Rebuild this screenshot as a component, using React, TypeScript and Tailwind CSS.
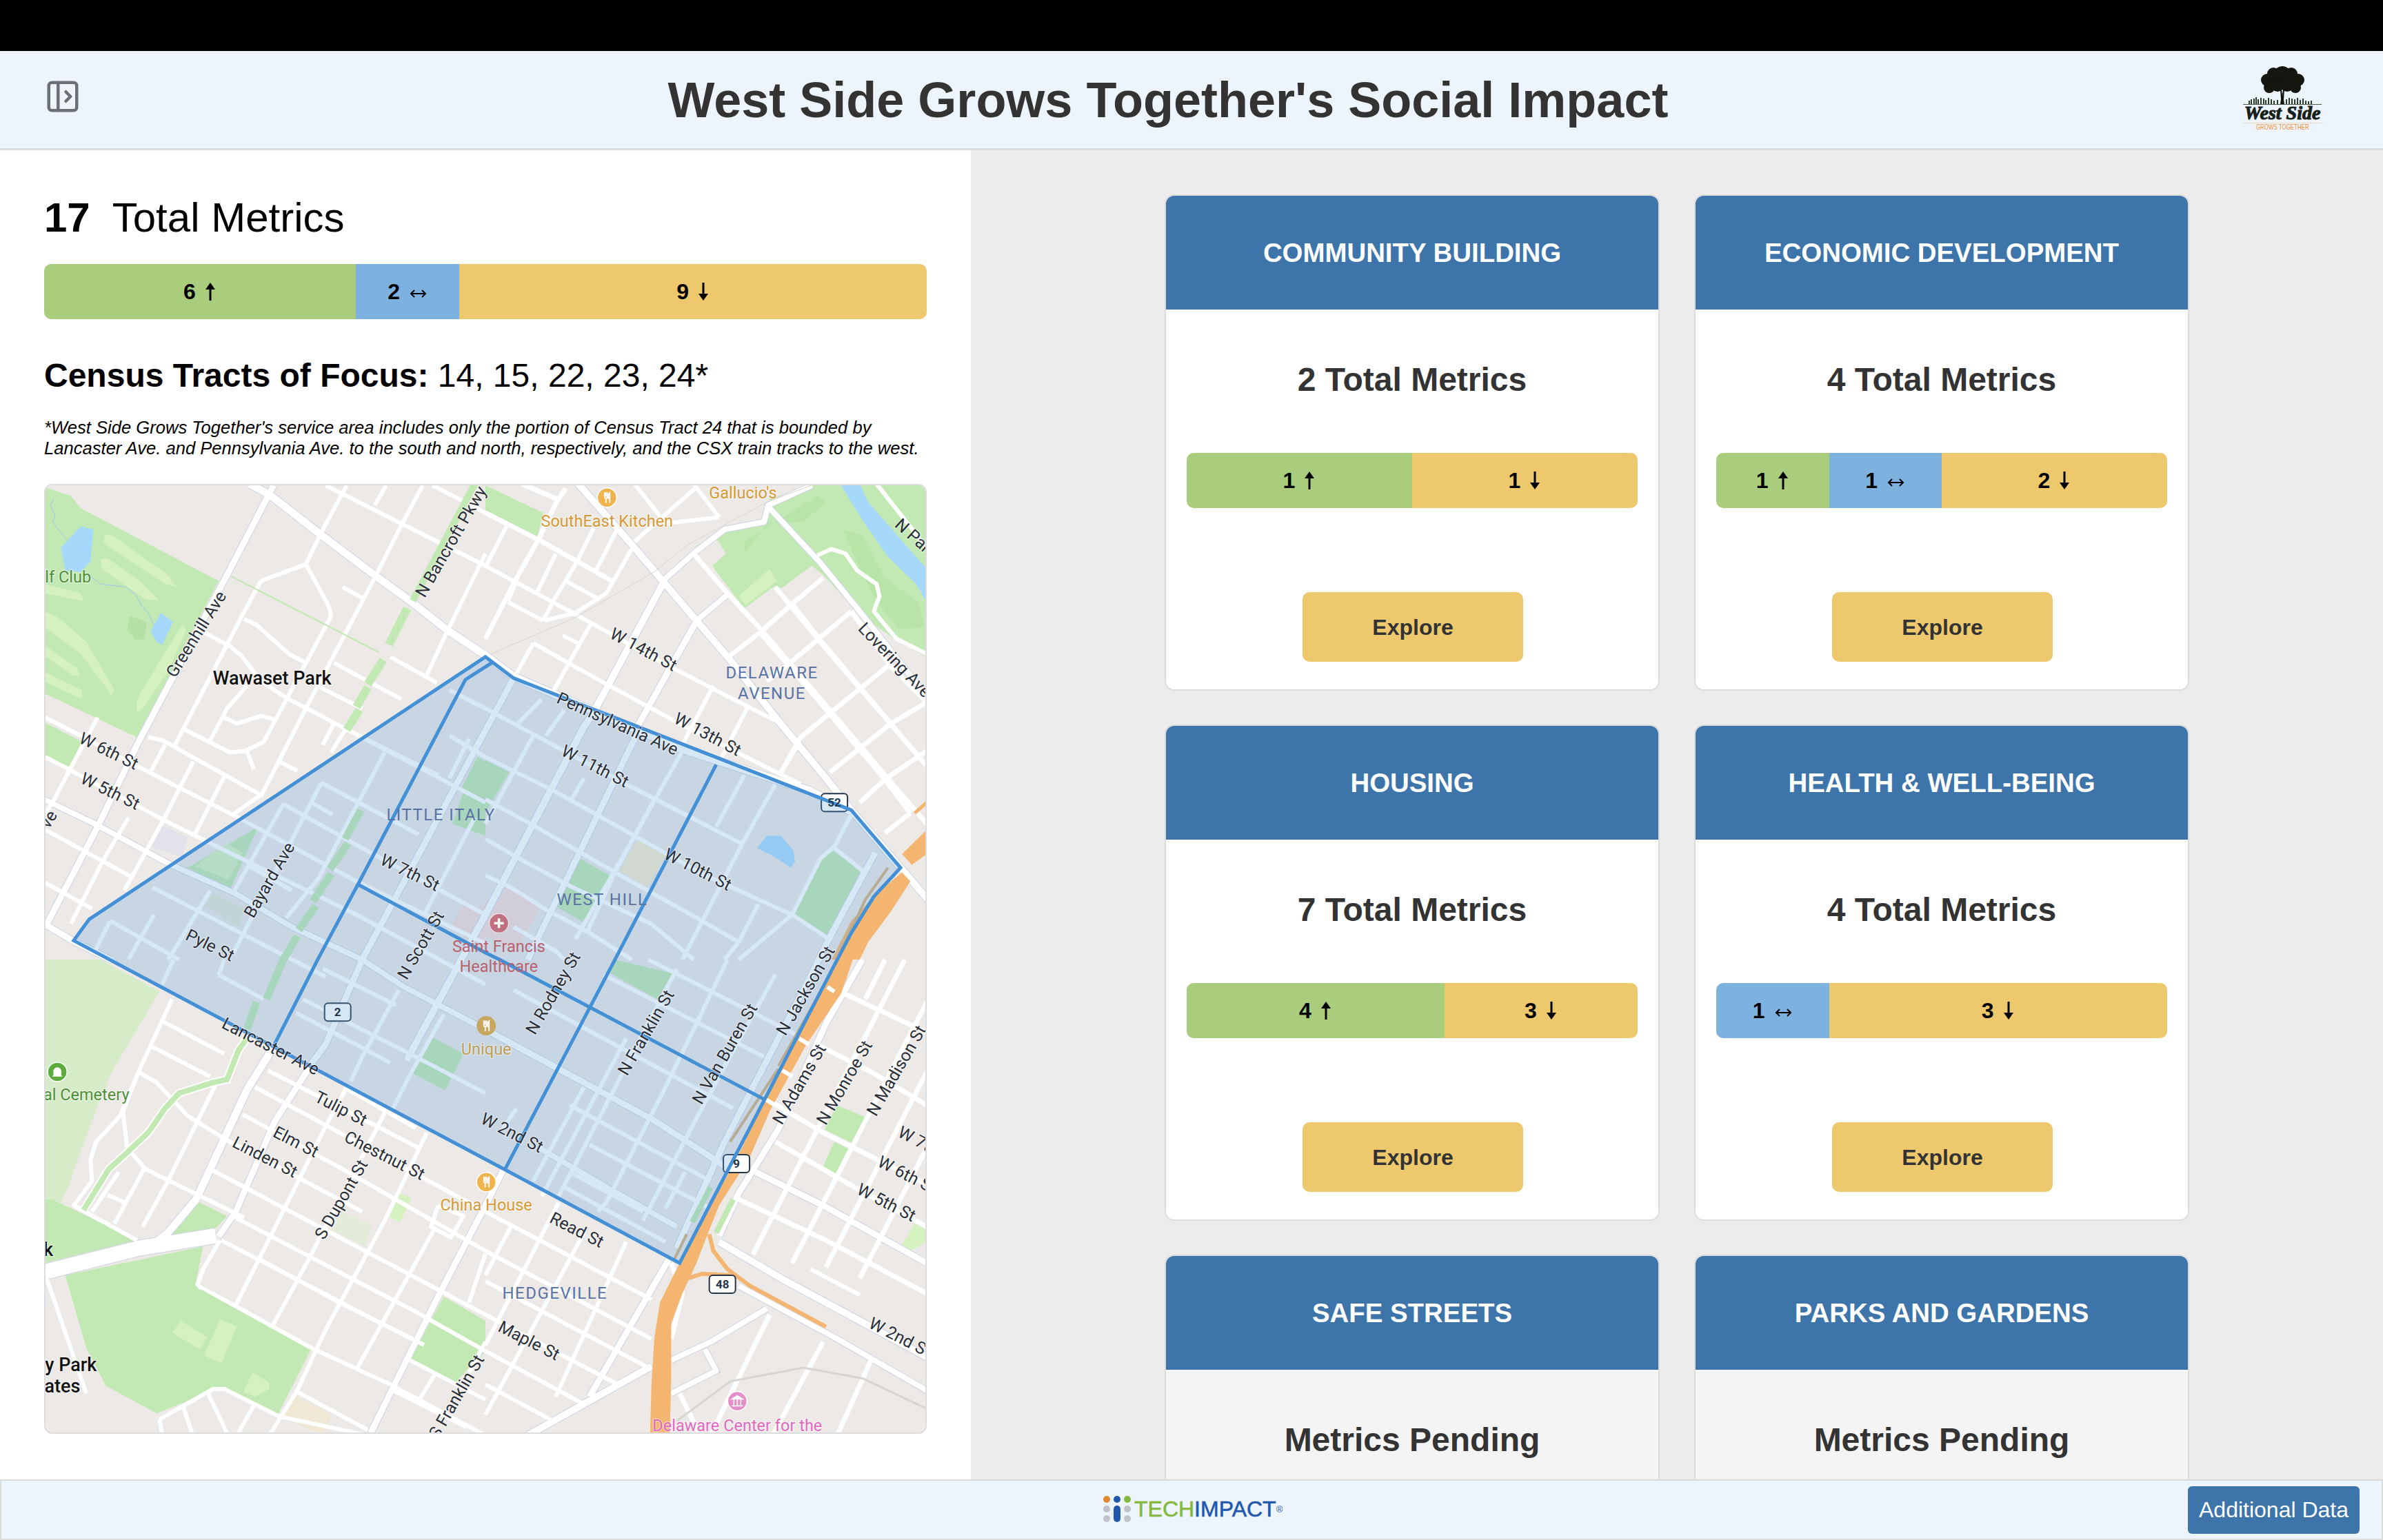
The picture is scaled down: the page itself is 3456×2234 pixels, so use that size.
import { PanelLeftOpen } from "lucide-react";

// map data is noted per quadrant of the 1280x1378 map, zoom coordinates 0-1568 on each side
type Road = [number, number, string];
type Label = [number, number, number, number, string, string?, number?];

const mx = (q: number, x: number) => ((q === 2 || q === 4 ? 1568 : 0) + x) / 2.45;
const my = (q: number, y: number) => ((q >= 3 ? 1568 : 0) + y) / 2.272;
const pts = (q: number, s: string) =>
  s
    .split(" ")
    .map((p) => {
      const [x, y] = p.split(",").map(Number);
      return `${mx(q, x).toFixed(1)},${my(q, y).toFixed(1)}`;
    })
    .join(" ");

const PARK = "#c2e9b3";
const LIGHT = "#d6f1c0";

const fills: [number, string, string][] = [
  // golf club and other parks
  [1, PARK, "0,10 95,40 130,80 620,320 330,835 0,690"],
  [1, PARK, "0,785 135,850 95,935 0,895"],
  [1, LIGHT, "215,170 235,165 440,300 470,340 430,330 210,195"],
  [1, LIGHT, "200,250 225,245 340,320 410,385 360,380 205,280"],
  [1, LIGHT, "0,330 130,360 140,385 0,360"],
  [1, LIGHT, "0,420 50,440 150,520 250,680 240,695 130,560 0,470"],
  [1, LIGHT, "0,530 120,610 125,635 100,630 0,565"],
  [1, LIGHT, "0,620 135,680 135,710 0,650"],
  [1, LIGHT, "490,465 505,480 440,620 350,740 330,755 330,710 420,570"],
  [1, "#b3e0a5", "305,435 365,455 355,510 325,515 295,480"],
  [1, "#a6d8fc", "60,210 130,140 175,150 165,255 130,290 75,285"],
  [1, "#a6d8fc", "415,425 458,455 420,530 400,520 378,487"],
  [1, PARK, "510,1265 760,1130 660,1340"],
  [1, LIGHT, "535,1260 650,1185 705,1215 655,1305"],
  [1, "#e6e6d6", "570,1390 600,1350 715,1400 690,1460"],
  [1, "#e2e2ea", "380,1195 420,1125 510,1165 490,1230"],
  [1, "#f8dcd8", "1450,1450 1490,1385 1568,1420 1568,1530 1500,1500"],
  [2, "#f8dcd8", "-20,1400 60,1325 200,1385 110,1540 -20,1480"],
  [1, PARK, "1485,1000 1540,900 1568,915 1568,1105"],
  [1, PARK, "1450,1120 1490,1015 1568,1055 1568,1160"],
  [2, PARK, "0,910 85,950 0,1085"],
  [2, PARK, "320,1225 450,1295 350,1445 235,1385"],
  [2, PARK, "1235,1210 1335,1275 1215,1490 1095,1425 1185,1235"],
  [2, "#f7ebcc", "540,1175 640,1225 575,1330 475,1275"],
  [2, "#a6d8fc", "965,1200 1000,1160 1050,1160 1095,1210 1100,1245 1085,1265 1030,1230"],
  [2, PARK, "0,5 205,95 185,175 0,90"],
  [2, PARK, "735,210 850,160 990,120 1010,50 1170,0 1568,0 1568,570 1450,510 1320,420 1200,300 1160,270 1050,345 1030,335 920,410 805,270 855,230 825,185"],
  [2, "#b8e4a8", "920,190 1180,40 1210,60 1130,125 1000,130 920,230"],
  [2, "#b8e4a8", "1270,150 1340,170 1420,310 1540,390 1560,470 1470,480 1400,400 1330,280"],
  [2, LIGHT, "900,370 1010,280 1035,320 925,400"],
  [2, "#a6d8fc", "1260,0 1330,0 1360,60 1568,280 1568,390 1530,330 1430,240 1340,120"],
  // cemetery and south park
  [3, "#d6ebc8", "0,0 200,0 410,105 240,370 170,530 85,750 60,800 30,790 0,820"],
  [3, PARK, "0,790 30,790 330,925 0,1000"],
  [3, PARK, "75,1040 565,945 540,1060 950,1280 830,1500 630,1410 400,1495 220,1405 150,1280"],
  [3, PARK, "540,795 650,845 610,885 430,925"],
  [3, PARK, "1420,1110 1568,1190 1568,1290 1460,1395 1300,1320"],
  [3, PARK, "1370,250 1490,310 1425,430 1300,370"],
  [3, LIGHT, "455,1230 485,1190 580,1245 555,1285"],
  [3, LIGHT, "625,1185 685,1210 630,1330 568,1305"],
  [3, LIGHT, "740,1360 800,1395 800,1415 750,1440 708,1425"],
  [3, LIGHT, "1250,765 1305,785 1265,865 1225,845"],
  [3, "#e2ecd8", "1060,830 1165,875 1140,945 1025,890"],
  [3, "#f0e8d4", "890,1435 1020,1500 990,1568 850,1505"],
  [4, PARK, "460,0 665,45 610,130 445,45"],
  [4, PARK, "1250,480 1365,525 1315,610 1205,560"],
  [4, PARK, "1240,600 1305,630 1255,710 1200,680"],
  [4, LIGHT, "1525,870 1568,890 1568,930 1510,960 1480,940"],
];

const roads: Road[] = [
  // north west quadrant
  [1, 11, "730,0 800,35 980,165 1180,305 1300,385 1430,480 1568,565 1668,635"],
  [1, 9, "815,5 650,300 330,860 190,1130 10,1450"],
  [1, 9, "0,1450 100,1505 240,1570"],
  [1, 8, "0,1040 190,1125 450,1255 680,1350 880,1460 1130,1568 1280,1658 1568,1798"],
  [1, 5, "5,770 140,835 330,930 690,1100 1110,1310 1568,1515"],
  [1, 5, "5,900 420,1105 570,1175 1110,1420 1568,1650"],
  [1, 5, "5,1140 310,1295"],
  [1, 5, "5,1315 170,1400"],
  [1, 5, "1075,5 985,160 930,265"],
  [1, 5, "1215,5 1175,70"],
  [1, 5, "1345,5 1270,135 1180,300 930,740 770,1030"],
  [1, 5, "1568,230 1430,490 1360,630"],
  [1, 5, "1000,5 1568,270"],
  [1, 5, "1380,5 1568,95"],
  [1, 5, "1030,790 990,860"],
  [1, 5, "1070,810 1020,885"],
  [1, 5, "770,320 700,440 465,860"],
  [1, 5, "770,320 930,265 1010,400 1020,435 780,850 715,880 660,885 500,810"],
  [1, 5, "1060,340 1130,375"],
  [1, 5, "710,445 755,465 870,560 930,590"],
  [1, 5, "570,490 660,535 700,565 770,650 860,705 1130,835 1400,960"],
  [1, 5, "720,665 650,740 590,845"],
  [1, 5, "640,770 685,790 770,765 815,775"],
  [1, 5, "720,880 745,940"],
  [1, 5, "835,915 900,945"],
  [1, 5, "1030,590 1270,710"],
  [1, 5, "980,670 1130,740"],
  [1, 5, "1230,570 1395,655"],
  [1, 5, "370,835 420,845 770,1025"],
  [1, 5, "430,860 380,945"],
  [1, 5, "530,915 425,1105 285,1340"],
  [1, 5, "640,965 535,1155"],
  [1, 5, "190,770 95,935 30,1050 0,1090"],
  [1, 5, "770,1025 670,1090"],
  [1, 5, "300,1100 210,1240 95,1450"],
  // inside the area, north west
  [1, 5, "985,985 790,1335 670,1550"],
  [1, 5, "850,1055 670,1350"],
  [1, 5, "985,985 1330,1155"],
  [1, 5, "850,1055 1110,1190 1568,1420"],
  [1, 5, "950,1050 1025,1090"],
  [1, 5, "730,1260 880,1340"],
  [1, 5, "1210,885 975,1300 860,1430"],
  [1, 5, "385,1330 1000,1625"],
  [1, 5, "235,1440 480,1568"],
  [1, 5, "235,1440 180,1540"],
  [1, 5, "590,1340 480,1510 440,1568"],
  [1, 5, "390,1420 300,1568"],
  [1, 5, "1440,680 1568,740"],
  [1, 5, "1440,830 1568,900"],
  [1, 5, "1130,835 1568,1050"],
  [1, 5, "1530,1100 1350,1420"],
  [1, 5, "1510,840 1440,970"],
  // wide avenues crossing the area
  [2, 10, "630,330 380,760 350,800 0,1420 -280,1900"],
  [2, 9, "745,460 540,800 530,840 150,1568"],
  [1, 9, "1668,640 1130,1568 1000,1848 960,1898 820,2100 680,2400 620,2480"],
  // north east quadrant
  [2, 10, "330,0 520,200 630,320 745,445 870,580 1040,780 1210,970 1300,1075 1480,1270 1600,1400"],
  [2, 11, "100,635 700,875 1150,1010 1300,1080"],
  [2, 8, "1000,70 1190,260 1330,420 1568,700"],
  [2, 5, "1180,235 1230,215 1280,230 1320,285 1390,330 1400,370 1380,420 1460,510 1568,560"],
  [2, 5, "1390,0 1568,210"],
  [2, 6, "0,95 190,185 450,320"],
  [2, 6, "130,0 255,50"],
  [2, 6, "285,15 250,65 190,180 105,320 0,510"],
  [2, 5, "465,155 390,290"],
  [2, 5, "520,215 430,360 320,425 210,450"],
  [2, 5, "385,145 320,265 245,380 205,450"],
  [2, 5, "250,230 185,355"],
  [2, 5, "75,140 5,265"],
  [2, 5, "0,270 370,455 640,595 1030,780"],
  [2, 5, "80,390 205,450"],
  [2, 5, "110,320 80,385"],
  [2, 5, "285,320 395,375"],
  [2, 5, "275,500 330,525"],
  [2, 5, "170,525 110,625"],
  [2, 5, "170,525 430,660 690,790 1120,990"],
  [2, 5, "375,460 240,685"],
  [2, 5, "530,0 640,130 830,110"],
  [2, 5, "740,0 830,110"],
  [2, 5, "530,190 750,10"],
  [2, 8, "630,320 745,225 850,150 990,125 1005,70 1160,5"],
  [2, 8, "750,450 860,365"],
  [2, 6, "740,230 860,360 980,480 1200,720 1420,960 1568,1120"],
  [2, 6, "1030,340 1225,560 1420,770 1568,930"],
  [2, 6, "1200,310 1090,395 975,490 870,565"],
  [2, 6, "1300,420 1185,510 1075,595 1000,650"],
  [2, 6, "1430,600 1225,755 1120,835 1045,960"],
  [2, 6, "1568,720 1440,790 1225,950"],
  [2, 6, "1568,880 1425,970 1330,1050"],
  [2, 6, "1510,1085 1420,1150"],
  [2, 6, "975,490 1075,595 1225,760 1325,870 1420,975 1510,1085"],
  [2, 6, "1090,395 1185,510 1340,680 1440,790 1568,930"],
  [2, 6, "1300,420 1440,600 1568,720"],
  [2, 5, "810,665 700,860"],
  [2, 5, "935,730 840,900"],
  [2, 5, "1110,860 1045,960"],
  // inside the area, north east
  [2, 5, "0,740 490,985 910,1185"],
  [2, 5, "0,900 240,1010 530,1160 780,1290 1090,1420 1230,1505"],
  [2, 5, "0,1040 160,1120 460,1280 770,1440 900,1510"],
  [2, 5, "0,1170 130,1240 300,1325 590,1450 740,1568"],
  [2, 5, "0,1290 90,1330 210,1400 370,1480 520,1568"],
  [2, 5, "100,1460 250,1540 280,1568"],
  [2, 5, "200,710 115,790"],
  [2, 5, "280,745 215,830"],
  [2, 5, "170,830 0,1120"],
  [2, 5, "350,970 300,1050"],
  [2, 5, "700,880 530,1160 320,1500"],
  [2, 5, "920,960 820,1130"],
  [2, 5, "1030,990 910,1190 700,1568"],
  [2, 5, "1300,1090 1240,1195 1190,1235 1090,1420 900,1568"],
  [2, 5, "600,1040 460,1280 360,1480"],
  [2, 5, "970,1385 900,1510 850,1568"],
  [2, 9, "1385,1215 1220,1500 1130,1668 850,2168 680,2518"],
  [2, 5, "1240,1200 1340,1275"],
  // south west quadrant
  [3, 22, "-10,1032 340,950 610,910"],
  [3, 11, "820,280 720,430 540,790 440,900 400,930"],
  [3, 9, "1633,690 1568,810 1400,1110 1160,1560"],
  [3, 5, "455,130 340,360 280,500 295,620 360,690 710,850"],
  [3, 5, "425,205 640,310"],
  [3, 5, "380,285 590,385"],
  [3, 5, "335,370 400,405 510,515 640,590 1130,830"],
  [3, 5, "795,365 1330,620"],
  [3, 5, "750,420 1568,830"],
  [3, 5, "705,510 1060,690 1568,960"],
  [3, 5, "600,695 1140,960 1568,1170"],
  [3, 5, "680,850 1100,1055 1300,1150 1568,1290"],
  [3, 5, "630,925 1190,1195 1310,1250"],
  [3, 5, "550,1075 950,1280 1230,1400 1568,1568"],
  [3, 5, "760,985 1050,1130 1350,1270"],
  [3, 5, "890,1420 1150,1550"],
  [3, 5, "1210,505 1130,650 950,970 810,1210"],
  [3, 5, "1070,430 1000,550 800,920 680,1140"],
  [3, 5, "1360,570 1210,860 1000,1220 900,1420 800,1568"],
  [3, 5, "1385,890 1290,1050 1110,1350"],
  [3, 5, "1568,970 1510,1130"],
  [3, 5, "610,410 440,730 350,880"],
  [3, 5, "625,925 565,1020 545,1070 560,1085"],
  [3, 5, "355,690 250,870"],
  [3, 5, "265,700 170,830"],
  [3, 5, "225,775 285,800"],
  [3, 5, "335,370 270,515 185,600 165,660 170,730 105,810 330,925"],
  [3, 5, "5,1040 150,1430"],
  [3, 5, "410,1515 600,1415 640,1415 835,1505 1150,1568"],
  [3, 5, "495,1475 525,1560"],
  [3, 5, "580,1425 650,1560"],
  [3, 5, "745,1470 690,1560"],
  [3, 5, "410,1515 420,1568"],
  [3, 5, "1400,810 1490,845 1445,915 1375,880 1400,810"],
  [3, 5, "1300,1320 1568,1450"],
  [3, 5, "1240,1420 1500,1540"],
  [3, 5, "1390,1365 1330,1455"],
  [3, 5, "1568,1260 1510,1360"],
  [3, 5, "460,0 420,80"],
  [3, 5, "620,50 780,130"],
  [3, 5, "620,50 640,0"],
  [3, 5, "920,130 1170,250 1300,310 1568,440"],
  [3, 5, "895,175 1130,290 1230,340"],
  [3, 5, "990,30 1250,150"],
  [3, 5, "1065,420 1320,555"],
  [3, 5, "1260,100 1130,320 1090,400"],
  [3, 5, "1420,180 1300,380 1240,490"],
  // south east quadrant
  [4, 9, "0,230 280,370 600,530 850,680"],
  [4, 8, "190,620 430,750 680,880"],
  [4, 5, "580,0 1110,250"],
  [4, 5, "420,50 990,320"],
  [4, 5, "100,100 880,490"],
  [4, 5, "300,480 800,730"],
  [4, 5, "370,610 800,820"],
  [4, 5, "300,700 560,830"],
  [4, 5, "280,750 640,930"],
  [4, 5, "680,30 450,440 260,780"],
  [4, 5, "860,0 640,420 430,800 400,830"],
  [4, 5, "1030,50 880,300 740,540 560,860"],
  [4, 5, "500,260 200,780"],
  [4, 5, "350,420 170,730"],
  [4, 5, "110,490 60,560"],
  [4, 5, "710,700 640,820"],
  [4, 5, "0,830 590,1120"],
  [4, 5, "0,960 590,1250"],
  [4, 5, "0,1060 590,1350"],
  [4, 5, "0,1170 480,1405"],
  [4, 5, "0,1290 350,1465"],
  [4, 5, "0,1400 240,1520"],
  [4, 5, "260,800 0,1270"],
  [4, 5, "90,880 0,1040"],
  [4, 5, "500,930 250,1440"],
  [4, 5, "350,900 170,1210 0,1500"],
  [4, 9, "650,990 370,1440"],
  [4, 10, "150,1568 590,1340"],
  [4, 9, "1340,0 1210,210 1040,560 900,770 830,910"],
  [4, 10, "830,930 1050,1050 1250,1150 1568,1310"],
  [4, 8, "900,1075 1250,1250 1568,1420"],
  [4, 6, "1270,110 1568,240"],
  [4, 6, "1180,280 1380,375 1568,480"],
  [4, 6, "1000,460 1200,570 1568,740"],
  [4, 6, "1030,600 1330,760 1568,880"],
  [4, 9, "960,700 1200,810 1568,1000"],
  [4, 6, "900,790 1200,920 1568,1100"],
  [4, 5, "1155,1020 1330,1105"],
  [4, 6, "1490,0 950,972"],
  [4, 6, "1568,140 1090,1000"],
  [4, 6, "1568,370 1210,1014"],
  [4, 6, "1568,620 1330,1050"],
  [4, 6, "1420,0 1350,130"],
  [4, 8, "660,1320 800,1260 1000,1150"],
  [4, 8, "660,1430 820,1355 780,1285"],
  [4, 7, "1010,1170 800,1568"],
  [4, 7, "1200,1260 1020,1568"],
  [4, 7, "1370,1320 1250,1568"],
  [4, 6, "690,1430 760,1560"],
  [4, 6, "660,1000 700,1100 660,1250"],
];

const STREET = 24.5;
const POI = 23.5;
const labels: Label[] = [
  [1, 85, 307, 0, "lf Club", "#4f8f3a", POI],
  [1, 540, 495, -58, "Greenhill Ave"],
  [1, 1445, 190, -60, "N Bancroft Pkwy"],
  [1, 810, 640, 0, "Wawaset Park", "#111111", 27],
  [1, 230, 880, 26, "W 6th St"],
  [1, 235, 1012, 26, "W 5th St"],
  [1, 15, 1105, -60, "ve"],
  [1, 800, 1305, -60, "Bayard Ave"],
  [1, 1300, 1280, 26, "W 7th St"],
  [1, 590, 1520, 26, "Pyle St"],
  [1, 1338, 1520, -60, "N Scott St"],
  [2, 915, 30, 0, "Gallucio's", "#d49a37", POI],
  [2, 432, 122, 0, "SouthEast Kitchen", "#d49a37", POI],
  [2, 1520, 170, 42, "N Par"],
  [2, 1455, 580, 46, "Lovering Ave"],
  [2, 562, 545, 28, "W 14th St"],
  [2, 790, 825, 28, "W 13th St"],
  [2, 470, 790, 24, "Pennsylvania Ave"],
  [2, 390, 930, 27, "W 11th St"],
  [2, 755, 1270, 27, "W 10th St"],
  [3, 805, 285, 27, "Lancaster Ave"],
  [3, 1055, 490, 27, "Tulip St"],
  [3, 1210, 645, 27, "Chestnut St"],
  [3, 895, 600, 27, "Elm St"],
  [3, 785, 650, 27, "Linden St"],
  [3, 1055, 790, -60, "S Dupont St"],
  [3, 150, 445, 0, "al Cemetery", "#4f8f3a", POI],
  [3, 1571, 808, 0, "China House", "#d49a37", POI],
  [3, 1571, 295, 0, "Unique", "#bd9f55", POI],
  [3, 15, 955, 0, "k", "#111111", 27],
  [3, 95, 1335, 0, "y Park", "#111111", 27],
  [3, 65, 1405, 0, "ates", "#111111", 27],
  [3, 1465, 1440, -60, "S Franklin St"],
  [4, 895, 1535, 0, "Delaware Center for the", "#df69bf", POI],
  [4, 240, 110, -60, "N Rodney St"],
  [4, 570, 240, -60, "N Franklin St"],
  [4, 850, 310, -60, "N Van Buren St"],
  [4, 1137, 102, -60, "N Jackson St"],
  [4, 1115, 410, -60, "N Adams St"],
  [4, 1275, 405, -60, "N Monroe St"],
  [4, 1460, 365, -60, "N Madison St"],
  [4, 1525, 590, 27, "W 7t"],
  [4, 1490, 705, 27, "W 6th S"],
  [4, 1425, 800, 27, "W 5th St"],
  [4, 95, 570, 27, "W 2nd St"],
  [4, 1465, 1240, 27, "W 2nd S"],
  [4, 325, 890, 27, "Read St"],
  [4, 155, 1255, 27, "Maple St"],
];

const areas: [number, number, string, string][] = [
  [1, 1410, 1090, "LITTLE ITALY"],
  [2, 1018, 622, "DELAWARE"],
  [2, 1018, 690, "AVENUE"],
  [2, 415, 1370, "WEST HILL"],
  [4, 247, 1100, "HEDGEVILLE"],
];

const shields: [number, number, number, string][] = [
  [2, 1240, 1050, "52"],
  [3, 1043, 173, "2"],
  [4, 892, 672, "9"],
  [4, 842, 1070, "48"],
];

function Fork({ x, y }: { x: number; y: number }) {
  return (
    <g stroke="#ffffff" strokeWidth={1.8} fill="none" strokeLinecap="round">
      <path d={`M${x - 3.5} ${y - 7}v6a2 2 0 0 0 2 2v6M${x - 1.5} ${y - 7}v5M${x + 0.5} ${y - 7}v6a2 2 0 0 1 -2 2`} />
      <path d={`M${x + 4} ${y + 7}v-14c-2 2 -2.5 5 -2 8h2`} />
    </g>
  );
}

function MapView() {
  const outer = `${pts(1, "105,1505 160,1435 1568,570")} ${pts(2, "100,640 1300,1075 1475,1265 1380,1360 1300,1480 1250,1568")} ${pts(4, "690,1000 65,690")}`;
  const tractA = `${pts(2, "22,590")} ${pts(1, "1497,645 1115,1320 972,1568")} ${pts(3, "815,285")}`;
  const tractB = `${pts(1, "1115,1320 1568,1545")} ${pts(4, "50,0 990,460")}`;
  const tractC = `${pts(2, "820,925 460,1568")} ${pts(4, "70,690")}`;
  return (
    <svg viewBox="2 2 1276 1374" className="block w-full h-full [font-family:Roboto,sans-serif]">
      <rect x="0" y="0" width="1280" height="1378" fill="#ece9e6" />
      {fills.map(([q, c, p], i) => (
        <polygon key={i} points={pts(q, p)} fill={c} />
      ))}
      <polyline points={pts(1, "35,50 22,70 40,105 30,125 80,185")} fill="none" stroke="#9cc6f0" strokeWidth={1} />
      <polyline points={pts(1, "165,305 200,330 290,340 325,365 345,400 370,425 390,465")} fill="none" stroke="#9cc6f0" strokeWidth={1} />
      {/* casing of the bigger roads */}
      {roads
        .filter((r) => r[1] >= 8)
        .map(([q, w, p], i) => (
          <polyline key={i} points={pts(q, p)} fill="none" stroke="#ccd3e3" strokeWidth={w + 2} />
        ))}
      {roads.map(([q, w, p], i) => (
        <polyline key={i} points={pts(q, p)} fill="none" stroke="#ffffff" strokeWidth={w <= 6 ? w + 1 : w} strokeLinejoin="round" />
      ))}
      {/* Bancroft Parkway and the other green strips */}
      <polyline points={pts(1, "1530,0 1310,385")} fill="none" stroke={PARK} strokeWidth={10} />
      <polyline points={pts(1, "1290,410 1225,530")} fill="none" stroke={PARK} strokeWidth={12} />
      <polyline points={pts(1, "1205,580 1150,660")} fill="none" stroke={PARK} strokeWidth={12} />
      <polyline points={pts(1, "1150,670 1110,735")} fill="none" stroke={PARK} strokeWidth={12} />
      <polyline points={pts(1, "1120,745 1075,810")} fill="none" stroke={PARK} strokeWidth={12} />
      <polyline points={pts(1, "1125,1075 1070,1170")} fill="none" stroke={PARK} strokeWidth={11} />
      <polyline points={pts(1, "1080,1185 1015,1270")} fill="none" stroke={PARK} strokeWidth={11} />
      <polyline points={pts(1, "1020,1285 955,1375")} fill="none" stroke={PARK} strokeWidth={11} />
      <polyline points={pts(1, "965,1390 905,1470")} fill="none" stroke={PARK} strokeWidth={11} />
      <polyline points={pts(1, "900,1490 850,1568 790,1698")} fill="none" stroke={PARK} strokeWidth={11} />
      <polyline points={pts(3, "755,140 720,230")} fill="none" stroke={PARK} strokeWidth={11} />
      <polyline points={pts(1, "665,305 1190,555")} fill="none" stroke={PARK} strokeWidth={2} />
      <polyline points={pts(3, "140,825 230,690 290,640 370,570 430,490 480,440 600,405 650,395 690,300 720,260")} fill="none" stroke="#ffffff" strokeWidth={12} />
      <polyline points={pts(3, "140,825 230,690 290,640 370,570 430,490 480,440 600,405 650,395 690,300 720,260")} fill="none" stroke={PARK} strokeWidth={8} />
      <polyline points={pts(4, "880,790 820,900")} fill="none" stroke={PARK} strokeWidth={8} />
      <polyline points={pts(4, "800,750 735,865")} fill="none" stroke={PARK} strokeWidth={8} />
      {/* railway */}
      <polyline points={pts(4, "680,1520 870,1390 1130,1345 1340,1380 1568,1480")} fill="none" stroke="#d8d4cf" strokeWidth={3} />
      <polyline points={pts(2, "20,560 320,440 600,290 720,200 1000,60 1170,0")} fill="none" stroke="#d8d4cf" strokeWidth={1} />
      {/* highway */}
      <polygon
        points={pts(4, "1305,0 1250,0 1080,280 1000,450 880,680 760,870 690,1000 620,1130 600,1250 590,1400 585,1568 655,1568 660,1380 660,1200 700,1100 750,1000 800,880 830,810 940,650 1010,500 1140,280 1265,110")}
        fill="#f4b570"
      />
      <polygon points={pts(2, "1230,1568 1300,1440 1390,1350 1480,1280 1510,1310 1440,1410 1360,1510 1330,1568")} fill="#f4b570" />
      <polygon points={pts(2, "1480,1220 1568,1140 1568,1220 1515,1255")} fill="#f4b570" />
      <polyline points={pts(2, "1525,1085 1568,1050")} fill="none" stroke="#f4b570" strokeWidth={5} />
      <polyline points={pts(2, "1250,1568 1350,1370 1430,1265")} fill="none" stroke="#d5ae7a" strokeWidth={4} />
      <polyline points={pts(4, "1200,90 1040,350")} fill="none" stroke="#d5ae7a" strokeWidth={3} />
      <polyline points={pts(4, "1040,360 870,600")} fill="none" stroke="#d5ae7a" strokeWidth={4} />
      <polyline points={pts(4, "715,905 670,990")} fill="none" stroke="#d5ae7a" strokeWidth={4} />
      <polyline points={pts(4, "795,905 810,960 860,1020 940,1075 1210,1210")} fill="none" stroke="#f4b570" strokeWidth={6} />
      <polyline points={pts(4, "720,1050 770,1035 870,1040")} fill="none" stroke="#f4b570" strokeWidth={6} />
      {["1215,90 1240,105", "1115,260 1150,280", "1055,365 1090,385", "995,460 1030,480"].map((p) => (
        <polyline key={p} points={pts(4, p)} fill="none" stroke="#ffffff" strokeWidth={6} />
      ))}
      {shields.map(([q, x, y, t]) => (
        <rect
          key={t}
          x={mx(q, x) - 19}
          y={my(q, y) - 13}
          width={38}
          height={26}
          rx={5}
          fill="#ffffff"
          stroke="#26364a"
          strokeWidth={2}
        />
      ))}
      {/* census tract overlay */}
      <polygon points={outer} fill="#61a3dc" fillOpacity={0.26} />
      <g fill="none" stroke="#4390d6" strokeWidth={5}>
        <polygon points={outer} />
        <polyline points={tractA} />
        <polyline points={tractB} />
        <polyline points={tractC} />
      </g>
      {shields.map(([q, x, y, t]) => (
        <text key={t} x={mx(q, x)} y={my(q, y) + 6} textAnchor="middle" fontSize={17} fontWeight={700} fill="#26364a">
          {t}
        </text>
      ))}
      {/* place markers */}
      <circle cx={mx(2, 432)} cy={my(2, 45)} r={14} fill="#f0b44e" stroke="#ffffff" strokeWidth={1.5} />
      <Fork x={mx(2, 432)} y={my(2, 45)} />
      <circle cx={mx(3, 1571)} cy={my(3, 733)} r={14} fill="#f0b44e" stroke="#ffffff" strokeWidth={1.5} />
      <Fork x={mx(3, 1571)} y={my(3, 733)} />
      <circle cx={mx(3, 1571)} cy={my(3, 218)} r={14} fill="#c8a860" />
      <Fork x={mx(3, 1571)} y={my(3, 218)} />
      <circle cx={mx(2, 48)} cy={my(2, 1448)} r={14} fill="#c0707f" stroke="#e8dde2" strokeWidth={1.5} />
      <path d={`M${mx(2, 48) - 7} ${my(2, 1448)}h14M${mx(2, 48)} ${my(2, 1448) - 7}v14`} stroke="#ffffff" strokeWidth={3.5} />
      <circle cx={mx(3, 47)} cy={my(3, 370)} r={14} fill="#5bab3d" stroke="#ffffff" strokeWidth={1.5} />
      <path d={`M${mx(3, 47) - 5} ${my(3, 370) + 6}v-7a5 5 0 0 1 10 0v7zM${mx(3, 47) - 7} ${my(3, 370) + 6}h14`} fill="#ffffff" stroke="#ffffff" strokeWidth={1.5} />
      <circle cx={mx(4, 895)} cy={my(4, 1455)} r={14} fill="#e58fc8" stroke="#ffffff" strokeWidth={1.5} />
      <path d={`M${mx(4, 895) - 8} ${my(4, 1455) - 3}l8 -5 8 5zM${mx(4, 895) - 8} ${my(4, 1455) + 7}h16M${mx(4, 895) - 5} ${my(4, 1455) - 3}v9M${mx(4, 895)} ${my(4, 1455) - 3}v9M${mx(4, 895) + 5} ${my(4, 1455) - 3}v9`} fill="#ffffff" stroke="#ffffff" strokeWidth={1.5} />
      {/* labels */}
      {labels.map(([q, x, y, rot, t, c, s]) => (
        <text
          key={t + q + x}
          x={0}
          y={0}
          transform={`translate(${mx(q, x).toFixed(1)} ${my(q, y).toFixed(1)}) rotate(${rot})`}
          textAnchor="middle"
          dominantBaseline="central"
          fontSize={s ?? STREET}
          fontWeight={s === 27 ? 500 : 400}
          fill={c ?? "#2a2f38"}
          stroke="#ffffff"
          strokeOpacity={0.45}
          strokeWidth={2.5}
          paintOrder="stroke"
        >
          {t}
        </text>
      ))}
      <text x={mx(2, 50) - 1} y={my(2, 1525)} textAnchor="middle" dominantBaseline="central" fontSize={POI} fill="#b9626f">
        Saint Francis
      </text>
      <text x={mx(2, 50) - 1} y={my(4, 22)} textAnchor="middle" dominantBaseline="central" fontSize={POI} fill="#b9626f">
        Healthcare
      </text>
      {areas.map(([q, x, y, t]) => (
        <text key={t} x={mx(q, x)} y={my(q, y)} textAnchor="middle" dominantBaseline="central" fontSize={24} letterSpacing={1.5} fill="#5a73a5">
          {t}
        </text>
      ))}
    </svg>
  );
}

function Logo() {
  return (
    <div className="w-[124px] flex flex-col items-center mt-[-4px]">
      <svg viewBox="0 0 114 56" className="w-[114px] h-[56px] block">
        <g fill="#14160f">
          <circle cx="57" cy="13" r="13" />
          <circle cx="44" cy="11" r="9" />
          <circle cx="70" cy="11" r="9" />
          <circle cx="35" cy="20" r="9" />
          <circle cx="80" cy="20" r="9" />
          <circle cx="38" cy="31" r="8" />
          <circle cx="76" cy="31" r="8" />
          <circle cx="50" cy="27" r="10" />
          <circle cx="64" cy="27" r="10" />
          <path d="M54 34h2l1 8 1-8h2l-1 14 1 7h-6l1-7z" />
        </g>
        <path d="M9 55v-5M12 55v-7M16 55v-8M19 55v-10M22 55v-7M26 55v-9M30 55v-8M33 55v-6M37 55v-9M41 55v-7M45 55v-5M50 55v-6M63 55v-7M67 55v-9M71 55v-8M75 55v-7M79 55v-9M83 55v-6M87 55v-8M91 55v-5M95 55v-4M99 55v-5" stroke="#2f3a28" strokeWidth={2} />
        <path d="M0 55.5h114" stroke="#4f5a48" strokeWidth={1} />
      </svg>
      <div className="w-[114px] text-center text-[28px] leading-[24px] font-bold italic text-[#14201a] [font-family:'Liberation_Serif',serif] [-webkit-text-stroke:1px_#14201a] whitespace-nowrap">
        West Side
      </div>
      <div className="w-[114px] mt-[2px] border-t border-[#efd9bd] flex justify-center">
        <span className="text-[11px] leading-[11px] text-[#ec8f35] whitespace-nowrap scale-x-[0.72]">GROWS TOGETHER</span>
      </div>
    </div>
  );
}

function Arrow({ sign }: { sign: string }) {
  if (sign === "flat") {
    return (
      <svg viewBox="0 0 27 14" className="w-[27px] h-[14px] ml-[13px] mt-[5px] block">
        <path d="M3 7h21M8 2 3 7l5 5M19 2l5 5-5 5" fill="none" stroke="#000000" strokeWidth={2} />
      </svg>
    );
  }
  return (
    <svg viewBox="0 0 18 26" className={`w-[18px] h-[26px] ml-[12px] block ${sign === "down" ? "rotate-180" : ""}`}>
      <path d="M9 8v18" stroke="#000000" strokeWidth={3} />
      <path d="M9 0 16 10H2z" fill="#000000" />
    </svg>
  );
}

function Segments({ up, flat, down, total }: { up: number; flat: number; down: number; total: number }) {
  const segs = [
    { n: up, sign: "up", cls: "bg-[#a9cd7c]" },
    { n: flat, sign: "flat", cls: "bg-[#7db2e0]" },
    { n: down, sign: "down", cls: "bg-[#eec86c]" },
  ].filter((s) => s.n > 0);
  return (
    <div className="flex w-full h-[80px] rounded-[10px] overflow-hidden">
      {segs.map((s) => (
        <div
          key={s.sign}
          className={`${s.cls} flex items-center justify-center text-[32px] font-bold text-black`}
          style={{ width: `${(s.n / total) * 100}%` }}
        >
          {s.n}
          <Arrow sign={s.sign} />
        </div>
      ))}
    </div>
  );
}

const areasOfWork = [
  { title: "COMMUNITY BUILDING", total: 2, up: 1, flat: 0, down: 1 },
  { title: "ECONOMIC DEVELOPMENT", total: 4, up: 1, flat: 1, down: 2 },
  { title: "HOUSING", total: 7, up: 4, flat: 0, down: 3 },
  { title: "HEALTH & WELL-BEING", total: 4, up: 0, flat: 1, down: 3 },
  { title: "SAFE STREETS", total: 0, up: 0, flat: 0, down: 0 },
  { title: "PARKS AND GARDENS", total: 0, up: 0, flat: 0, down: 0 },
];

export default function App() {
  return (
    <div className="w-[3456px] h-[2234px] flex flex-col overflow-hidden bg-black [font-family:'Liberation_Sans',Arial,sans-serif]">
      <div className="h-[74px] shrink-0 bg-black" />

      {/* Header */}
      <header className="h-[144px] shrink-0 flex items-center pl-[60px] pr-[84px] bg-[#edf4fb] border-b-[3px] border-[#dcdcdc]">
        <div className="w-[80px] pl-[4px] mt-[-10px]">
          <PanelLeftOpen size={54} strokeWidth={2} className="text-[#6c6f73]" />
        </div>
        <h1 className="flex-1 text-center text-[72px] leading-[86px] font-bold text-[#333333] whitespace-nowrap">
          West Side Grows Together's Social Impact
        </h1>
        <Logo />
      </header>

      <main className="flex-1 min-h-0 flex">
        {/* Left column */}
        <section className="w-[1408px] shrink-0 bg-white pt-[64px] px-[64px]">
          <h2 className="text-[60px] leading-[68px] text-black">
            <span className="font-bold">17</span>
            <span className="ml-[32px]">Total Metrics</span>
          </h2>
          <div className="mt-[33px]">
            <Segments up={6} flat={2} down={9} total={17} />
          </div>
          <p className="mt-[53px] text-[48px] leading-[58px] text-black">
            <span className="font-bold">Census Tracts of Focus:</span> 14, 15, 22, 23, 24*
          </p>
          <p className="mt-[31px] text-[25.6px] leading-[30px] italic text-black">
            *West Side Grows Together's service area includes only the portion of Census Tract 24 that is bounded by
            Lancaster Ave. and Pennsylvania Ave. to the south and north, respectively, and the CSX train tracks to the
            west.
          </p>
          <div className="mt-[37px] h-[1378px] rounded-[12px] border-2 border-[#dcdcdc] overflow-hidden">
            <MapView />
          </div>
        </section>

        {/* Right column */}
        <section className="flex-1 min-w-0 bg-[#ececec] pt-[64px] overflow-hidden">
          <div className="grid grid-cols-[718px_718px] gap-x-[50px] gap-y-[49px] justify-center">
            {areasOfWork.map((a) => (
              <article
                key={a.title}
                className={`h-[720px] rounded-[14px] border-2 border-[#dcdcdc] overflow-hidden ${a.total ? "bg-white" : "bg-[#f4f4f4]"}`}
              >
                <div className="h-[165px] bg-[#3d75aa] flex items-center justify-center text-[38.4px] font-bold text-white">
                  {a.title}
                </div>
                {a.total ? (
                  <div className="flex flex-col items-center px-[30px] pt-[73px]">
                    <div className="text-[48px] leading-[58px] font-bold text-[#333333]">{a.total} Total Metrics</div>
                    <div className="mt-[77px] w-full">
                      <Segments up={a.up} flat={a.flat} down={a.down} total={a.total} />
                    </div>
                    <button className="mt-[122px] ml-[2px] w-[320px] h-[101px] rounded-[10px] bg-[#eec86c] text-[32px] font-bold text-[#333333]">
                      Explore
                    </button>
                  </div>
                ) : (
                  <div className="flex justify-center pt-[73px] text-[48px] leading-[58px] font-bold text-[#333333]">
                    Metrics Pending
                  </div>
                )}
              </article>
            ))}
          </div>
        </section>
      </main>

      {/* Footer */}
      <footer className="h-[88px] shrink-0 relative flex items-center justify-end pr-[32px] bg-[#edf4fb] border-2 border-[#dcdcdc]">
        <div className="absolute left-[1598px] top-[22px] flex items-center">
          <svg viewBox="0 0 40 38" className="w-[40px] h-[38px] block">
            <ellipse cx="5" cy="5" rx="5" ry="5" fill="#e0892f" />
            <ellipse cx="20" cy="5" rx="5" ry="5" fill="#2158ad" />
            <ellipse cx="35" cy="5" rx="5" ry="5" fill="#84b93f" />
            <ellipse cx="5" cy="19" rx="5" ry="5" fill="#bfc3c7" />
            <rect x="15" y="14" width="10" height="24" rx="5" fill="#2158ad" />
            <ellipse cx="35" cy="19" rx="5" ry="5" fill="#bfc3c7" />
            <ellipse cx="5" cy="33" rx="5" ry="5" fill="#bfc3c7" />
            <ellipse cx="35" cy="33" rx="5" ry="5" fill="#bfc3c7" />
          </svg>
          <div className="ml-[5px] text-[32px] leading-[36px] whitespace-nowrap [-webkit-text-stroke:0.6px_currentColor]">
            <span className="text-[#84b93f]">TECH</span>
            <span className="text-[#2158ad]">IMPACT</span>
            <sup className="text-[13px] text-[#2158ad] [-webkit-text-stroke:0px]">®</sup>
          </div>
        </div>
        <button className="w-[249px] h-[69px] rounded-[6px] bg-[#3d75aa] text-[32px] text-white whitespace-nowrap">
          Additional Data
        </button>
      </footer>
    </div>
  );
}
